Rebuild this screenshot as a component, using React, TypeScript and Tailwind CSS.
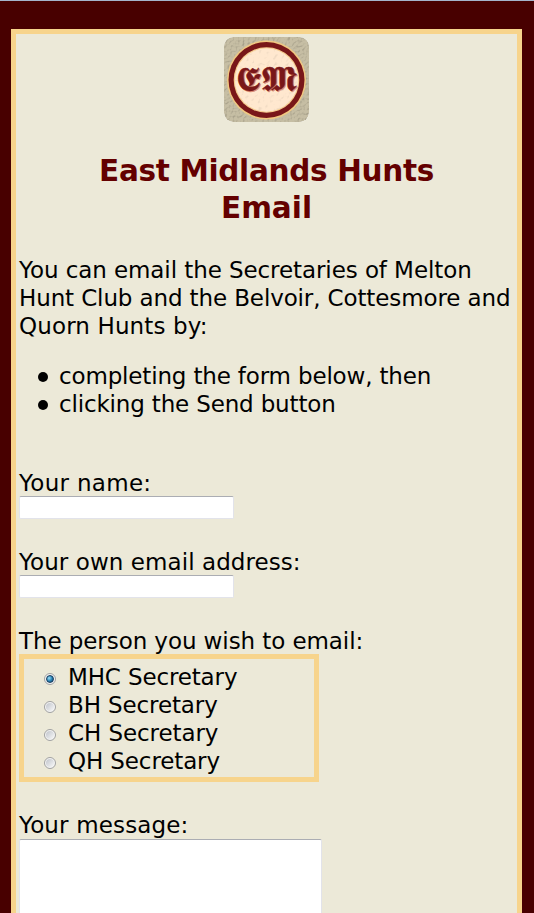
/**
 * Email form page for the East Midlands Hunts.
 */

import { useState } from "react";

// Tracking is tuned per string so the lines keep Verdana-like widths
const SECRETARIES = [
  { name: "MHC Secretary", tracking: "tracking-[-0.14px]" },
  { name: "BH Secretary", tracking: "tracking-[-0.12px]" },
  { name: "CH Secretary", tracking: "tracking-[-0.08px]" },
  { name: "QH Secretary", tracking: "tracking-[-0.12px]" },
];

const FIELD_CLASS =
  "block rounded-[2px] border border-[#e2e3ea] border-t-[#abadb3] bg-white px-1 text-base outline-none";

// ---------------------------------------------------------------------------

function Logo() {
  return (
    <svg
      width="85"
      height="85"
      viewBox="0 0 85 85"
      className="overflow-visible"
      role="img"
      aria-label="East Midlands Hunts"
    >
      <defs>
        <filter id="stone" x="0" y="0" width="100%" height="100%">
          <feTurbulence type="fractalNoise" baseFrequency="0.4" numOctaves="3" seed="4" result="noise" />
          <feDiffuseLighting in="noise" surfaceScale="1.1" diffuseConstant="1.14" lightingColor="#fff" result="light">
            <feDistantLight azimuth="225" elevation="60" />
          </feDiffuseLighting>
          <feBlend in="SourceGraphic" in2="light" mode="multiply" result="blend" />
          <feComposite in="blend" in2="SourceGraphic" operator="in" />
        </filter>
        <filter id="paper" x="0" y="0" width="100%" height="100%">
          <feTurbulence type="fractalNoise" baseFrequency="0.25" numOctaves="2" seed="9" result="noise" />
          <feDiffuseLighting in="noise" surfaceScale="0.8" diffuseConstant="1.14" lightingColor="#fff" result="light">
            <feDistantLight azimuth="225" elevation="65" />
          </feDiffuseLighting>
          <feBlend in="SourceGraphic" in2="light" mode="multiply" result="blend" />
          <feComposite in="blend" in2="SourceGraphic" operator="in" />
        </filter>
      </defs>
      <rect width="85" height="85" rx="9" fill="#c6bea4" filter="url(#stone)" />
      <circle cx="42.5" cy="43" r="39.5" fill="#f0c882" />
      <circle cx="42.5" cy="43" r="38" fill="#791719" />
      <circle cx="42.5" cy="43" r="32.8" fill="#f6cd92" />
      <circle cx="42.5" cy="43" r="31.5" fill="#ffe8cf" filter="url(#paper)" />
      <g fontFamily="'DejaVu Sans', serif" fontSize="32" textAnchor="middle" strokeWidth="0.5">
        <text transform="translate(43.3 55) scale(1.17 1.05)" fill="#dc8b72" stroke="#dc8b72" aria-hidden="true">
          𝕰𝕸
        </text>
        <text transform="translate(42.3 53.8) scale(1.17 1.05)" fill="#791719" stroke="#791719">
          𝕰𝕸
        </text>
      </g>
    </svg>
  );
}

function TextField({ label, name, tracking }: { label: string; name: string; tracking: string }) {
  return (
    <div>
      <label htmlFor={name} className={`block h-[27px] ${tracking}`}>
        {label}
      </label>
      <input id={name} name={name} type="text" className={`${FIELD_CLASS} h-[23px] w-[215px]`} />
    </div>
  );
}

function Radio({ checked }: { checked: boolean }) {
  return (
    <span className="mt-[3px] flex size-3 items-center justify-center rounded-full border border-[#a0a1a1] bg-[#f4f4f4]">
      <span
        className={
          checked
            ? "size-2 rounded-full border border-[#183c5c] bg-radial-[at_35%_35%] from-[#9fe0f8] via-[#2b87b8] to-[#123f66]"
            : "size-2 rounded-full bg-linear-to-br from-[#c0c4cb] to-[#f8f8f8]"
        }
      />
    </span>
  );
}

// ---------------------------------------------------------------------------

export default function App() {
  const [recipient, setRecipient] = useState(SECRETARIES[0].name);

  return (
    <div className="h-[913px] w-[534px] overflow-hidden border-t border-[#a5b4cb] bg-[#480000] pt-7 pl-[11px] font-['DejaVu_Sans',sans-serif] text-[23px] leading-7 text-black">
      <main className="h-[900px] w-[511px] border-[5px] border-[#f7d48c] bg-[#ece9d8] px-[3px] pt-[3px]">
        <div className="flex justify-center">
          <Logo />
        </div>

        <h1 className="mt-[31px] text-center text-[29.5px] leading-[37px] font-bold text-[#640000]">
          <span className="block tracking-[-0.32px]">East Midlands Hunts</span>
          <span className="block">Email</span>
        </h1>

        <p className="mt-[29px] whitespace-nowrap">
          <span className="block tracking-[-0.08px]">You can email the Secretaries of Melton</span>
          <span className="block tracking-[-0.12px]">Hunt Club and the Belvoir, Cottesmore and</span>
          <span className="block tracking-[0.13px]">Quorn Hunts by:</span>
        </p>

        <ul className="mt-[22px] tracking-[-0.16px]">
          {["completing the form below, then", "clicking the Send button"].map((step) => (
            <li key={step} className="flex items-center">
              <span className="mt-[2px] mr-[11px] ml-[19px] size-[10px] rounded-full bg-black" />
              {step}
            </li>
          ))}
        </ul>

        <form className="mt-[51px] flex flex-col gap-[29px]">
          <TextField label="Your name:" name="name" tracking="tracking-[0.3px]" />
          <TextField label="Your own email address:" name="email" tracking="tracking-[0.07px]" />

          <div>
            <div className="h-[27px] tracking-[-0.08px]">The person you wish to email:</div>
            <div className="h-32 w-[300px] border-[5px] border-[#f7d48c] pt-1 pl-5">
              {SECRETARIES.map(({ name, tracking }) => (
                <label key={name} className="flex items-center">
                  <input
                    type="radio"
                    name="recipient"
                    className="sr-only"
                    checked={recipient === name}
                    onChange={() => setRecipient(name)}
                  />
                  <Radio checked={recipient === name} />
                  <span className={`ml-3 ${tracking}`}>{name}</span>
                </label>
              ))}
            </div>
          </div>

          <div>
            <label htmlFor="message" className="block h-7 tracking-[0.15px]">
              Your message:
            </label>
            <textarea id="message" name="message" className={`${FIELD_CLASS} h-[160px] w-[303px] resize-none`} />
          </div>
        </form>
      </main>
    </div>
  );
}
